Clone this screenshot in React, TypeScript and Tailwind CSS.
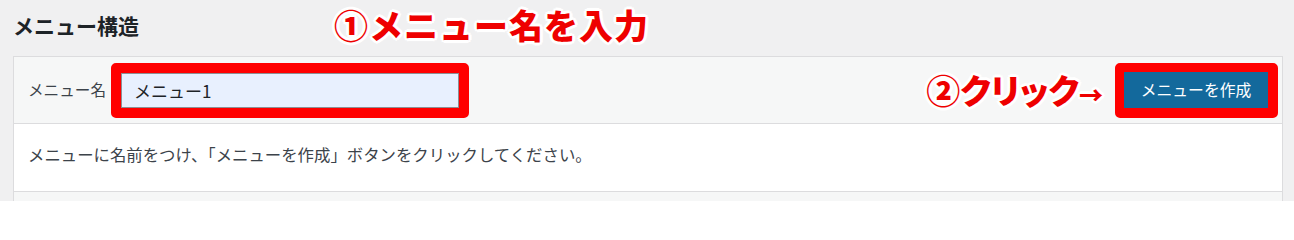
import React from 'react';

const halo =
  '[text-shadow:0_0_3px_#fff,0_0_5px_#fff,2px_2px_0_#fff,-2px_-2px_0_#fff,2px_-2px_0_#fff,-2px_2px_0_#fff,0_3px_0_#fff,0_-3px_0_#fff,3px_0_0_#fff,-3px_0_0_#fff]';

const App: React.FC = () => {
  return (
    <div className="relative h-[201px] overflow-hidden bg-[#f0f0f1] font-['Noto_Sans_CJK_JP',sans-serif] text-[#3c434a]">
      {/* Annotation 1 */}
      <div
        className={`absolute left-[334px] top-[8px] text-[34px] leading-none font-black tracking-[1px] text-[#ee0000] ${halo}`}
      >
        ①メニュー名を入力
      </div>

      <div className="pl-[13px] pr-[11px]">
        <h2 className="h-[56px] pt-[10px] text-[21px] leading-[30px] font-bold text-[#1d2327]">メニュー構造</h2>

        <div className="border-x border-t border-[#dcdcde]">
          {/* Header */}
          <div className="h-[67px] flex items-center pl-[14px] pr-[4px] bg-[#f6f7f7] border-b border-[#dcdcde]">
            <label className="text-[15.6px] leading-none">メニュー名</label>
            <div className="ml-[5px] border-[10px] border-[#ff0000] rounded-[5px]">
              <input
                readOnly
                value="メニュー1"
                className="block w-[338px] h-[35px] px-[12px] border border-[#8c8f94] bg-[#e8f0fe] text-[17px] text-[#1d2327] outline-none"
              />
            </div>

            <div
              className={`ml-auto mr-[12px] text-[34px] leading-none font-black text-[#ee0000] [font-feature-settings:'palt'] ${halo}`}
            >
              ②クリック<span className="text-[24px]">→</span>
            </div>
            <div className="border-t-[9px] border-l-[9px] border-r-[10px] border-b-[10px] border-[#ff0000] rounded-[5px]">
              <button className="block w-[144px] h-[36px] bg-[#13699c] text-white text-[15.8px] leading-none">
                メニューを作成
              </button>
            </div>
          </div>

          {/* Body */}
          <div className="h-[68px] flex items-center pl-[14px] pb-[6px] bg-white border-b border-[#dcdcde]">
            <p className="text-[16.4px] leading-none">
              メニューに名前をつけ、「メニューを作成」ボタンをクリックしてください。
            </p>
          </div>

          <div className="h-[20px] bg-[#f6f7f7]" />
        </div>
      </div>
    </div>
  );
};

export default App;
